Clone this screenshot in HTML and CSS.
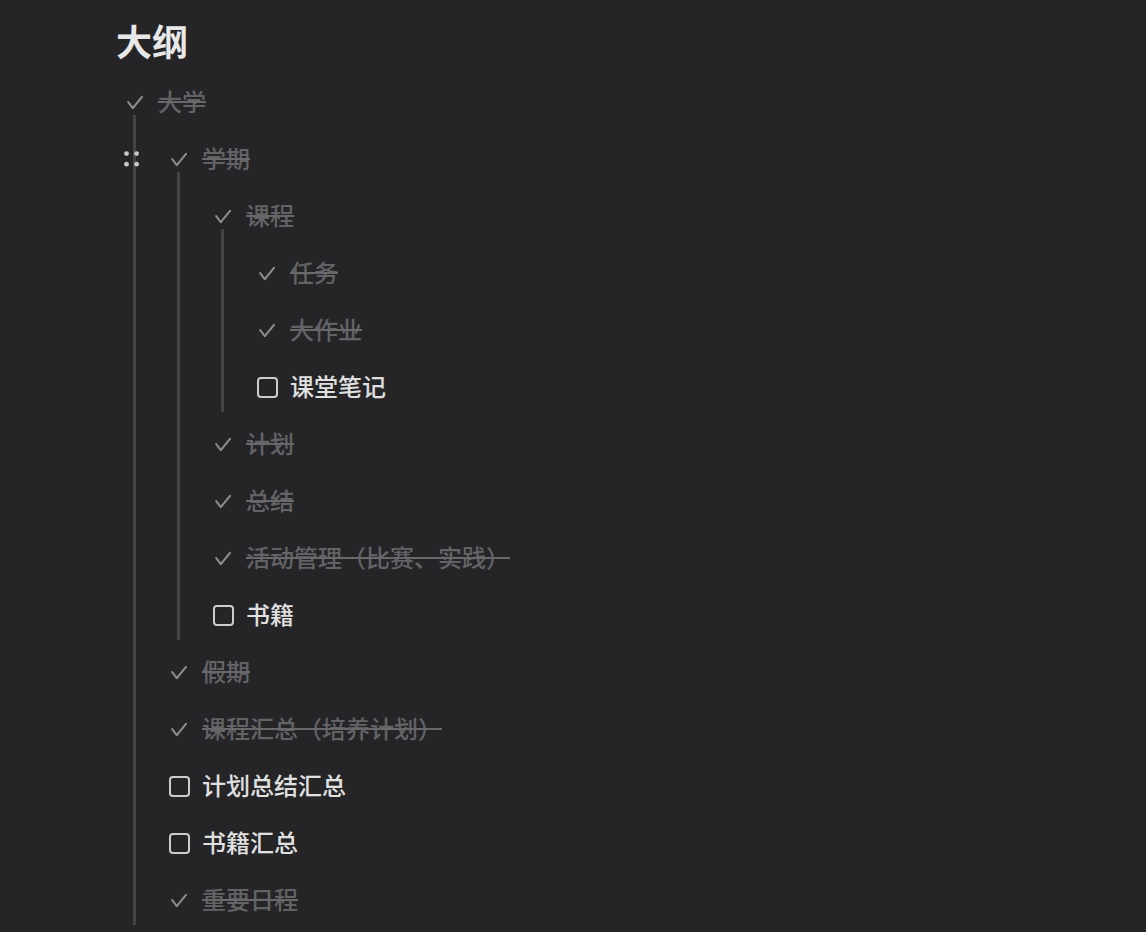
FILE: index.html
```html
<!DOCTYPE html>
<html lang="zh-CN">
<head>
<meta charset="utf-8">
<title>大纲</title>
<link rel="stylesheet" href="styles.css">
</head>
<body>
<main class="page">
  <h1 class="title">大纲</h1>
  <ul class="tree">
    <li class="item done">
      <div class="row"><span class="icon"><svg class="check" viewBox="0 0 16 16"><path d="M1.2 7.2 L5.8 13.2 L15 1.8"/></svg></span><span class="text">大学</span></div>
      <ul class="children">
        <li class="item done">
          <div class="row">
            <svg class="handle" viewBox="0 0 16 16"><circle cx="2.5" cy="2.6" r="2.4"/><circle cx="12.6" cy="2.6" r="2.4"/><circle cx="2.5" cy="13.2" r="2.4"/><circle cx="12.6" cy="13.2" r="2.4"/></svg>
            <span class="icon"><svg class="check" viewBox="0 0 16 16"><path d="M1.2 7.2 L5.8 13.2 L15 1.8"/></svg></span><span class="text">学期</span></div>
          <ul class="children">
            <li class="item done">
              <div class="row"><span class="icon"><svg class="check" viewBox="0 0 16 16"><path d="M1.2 7.2 L5.8 13.2 L15 1.8"/></svg></span><span class="text">课程</span></div>
              <ul class="children">
                <li class="item done"><div class="row"><span class="icon"><svg class="check" viewBox="0 0 16 16"><path d="M1.2 7.2 L5.8 13.2 L15 1.8"/></svg></span><span class="text">任务</span></div></li>
                <li class="item done"><div class="row"><span class="icon"><svg class="check" viewBox="0 0 16 16"><path d="M1.2 7.2 L5.8 13.2 L15 1.8"/></svg></span><span class="text">大作业</span></div></li>
                <li class="item"><div class="row"><span class="icon"><span class="box"></span></span><span class="text">课堂笔记</span></div></li>
              </ul>
            </li>
            <li class="item done"><div class="row"><span class="icon"><svg class="check" viewBox="0 0 16 16"><path d="M1.2 7.2 L5.8 13.2 L15 1.8"/></svg></span><span class="text">计划</span></div></li>
            <li class="item done"><div class="row"><span class="icon"><svg class="check" viewBox="0 0 16 16"><path d="M1.2 7.2 L5.8 13.2 L15 1.8"/></svg></span><span class="text">总结</span></div></li>
            <li class="item done"><div class="row"><span class="icon"><svg class="check" viewBox="0 0 16 16"><path d="M1.2 7.2 L5.8 13.2 L15 1.8"/></svg></span><span class="text">活动管理（比赛、实践）</span></div></li>
            <li class="item"><div class="row"><span class="icon"><span class="box"></span></span><span class="text">书籍</span></div></li>
          </ul>
        </li>
        <li class="item done"><div class="row"><span class="icon"><svg class="check" viewBox="0 0 16 16"><path d="M1.2 7.2 L5.8 13.2 L15 1.8"/></svg></span><span class="text">假期</span></div></li>
        <li class="item done"><div class="row"><span class="icon"><svg class="check" viewBox="0 0 16 16"><path d="M1.2 7.2 L5.8 13.2 L15 1.8"/></svg></span><span class="text">课程汇总（培养计划）</span></div></li>
        <li class="item"><div class="row"><span class="icon"><span class="box"></span></span><span class="text">计划总结汇总</span></div></li>
        <li class="item"><div class="row"><span class="icon"><span class="box"></span></span><span class="text">书籍汇总</span></div></li>
        <li class="item done"><div class="row"><span class="icon"><svg class="check" viewBox="0 0 16 16"><path d="M1.2 7.2 L5.8 13.2 L15 1.8"/></svg></span><span class="text">重要日程</span></div></li>
      </ul>
    </li>
  </ul>
</main>
</body>
</html>
```

FILE: styles.css
```css
html, body {
  margin: 0;
  padding: 0;
  background: #252528;
}
body {
  font-family: "Noto Sans CJK SC", "Noto Sans", sans-serif;
  color: #dcdcdc;
  height: 932px;
  overflow: hidden;
}
.page {
  padding-left: 119px;
}
.title {
  margin: 0 0 9px -3px;
  padding-top: 15px;
  height: 50px;
  line-height: 50px;
  font-size: 36px;
  font-weight: 700;
  color: #e8e8e8;
}
.tree, .children {
  list-style: none;
  margin: 0;
  padding: 0;
}
.children {
  position: relative;
  margin-left: 14px;
  padding-left: 30px;
}
.children::before {
  content: "";
  position: absolute;
  left: 0;
  top: -16px;
  bottom: 4px;
  width: 3px;
  background: #444446;
}
.row {
  position: relative;
  display: flex;
  align-items: center;
  height: 57px;
}
.icon {
  width: 32px;
  height: 24px;
  flex: 0 0 32px;
  display: flex;
  align-items: center;
  justify-content: center;
  margin-right: 7px;
}
.check {
  width: 16px;
  height: 16px;
  fill: none;
  stroke: #8c8c8c;
  stroke-width: 2.1;
  stroke-linecap: round;
  stroke-linejoin: round;
}
.box {
  width: 17px;
  height: 17px;
  border: 2px solid #cdcdcd;
  border-radius: 4px;
}
.text {
  font-size: 24px;
  line-height: 32px;
  margin-top: -3px;
  color: #e0e0e0;
  white-space: nowrap;
  font-weight: 500;
}
.done > .row .text {
  color: #636366;
  text-decoration: line-through;
  text-decoration-color: #69696b;
  text-decoration-thickness: 1.5px;
}
.handle {
  position: absolute;
  left: -39px;
  top: 20px;
  width: 16px;
  height: 16px;
  fill: #c8c8c8;
}
```
